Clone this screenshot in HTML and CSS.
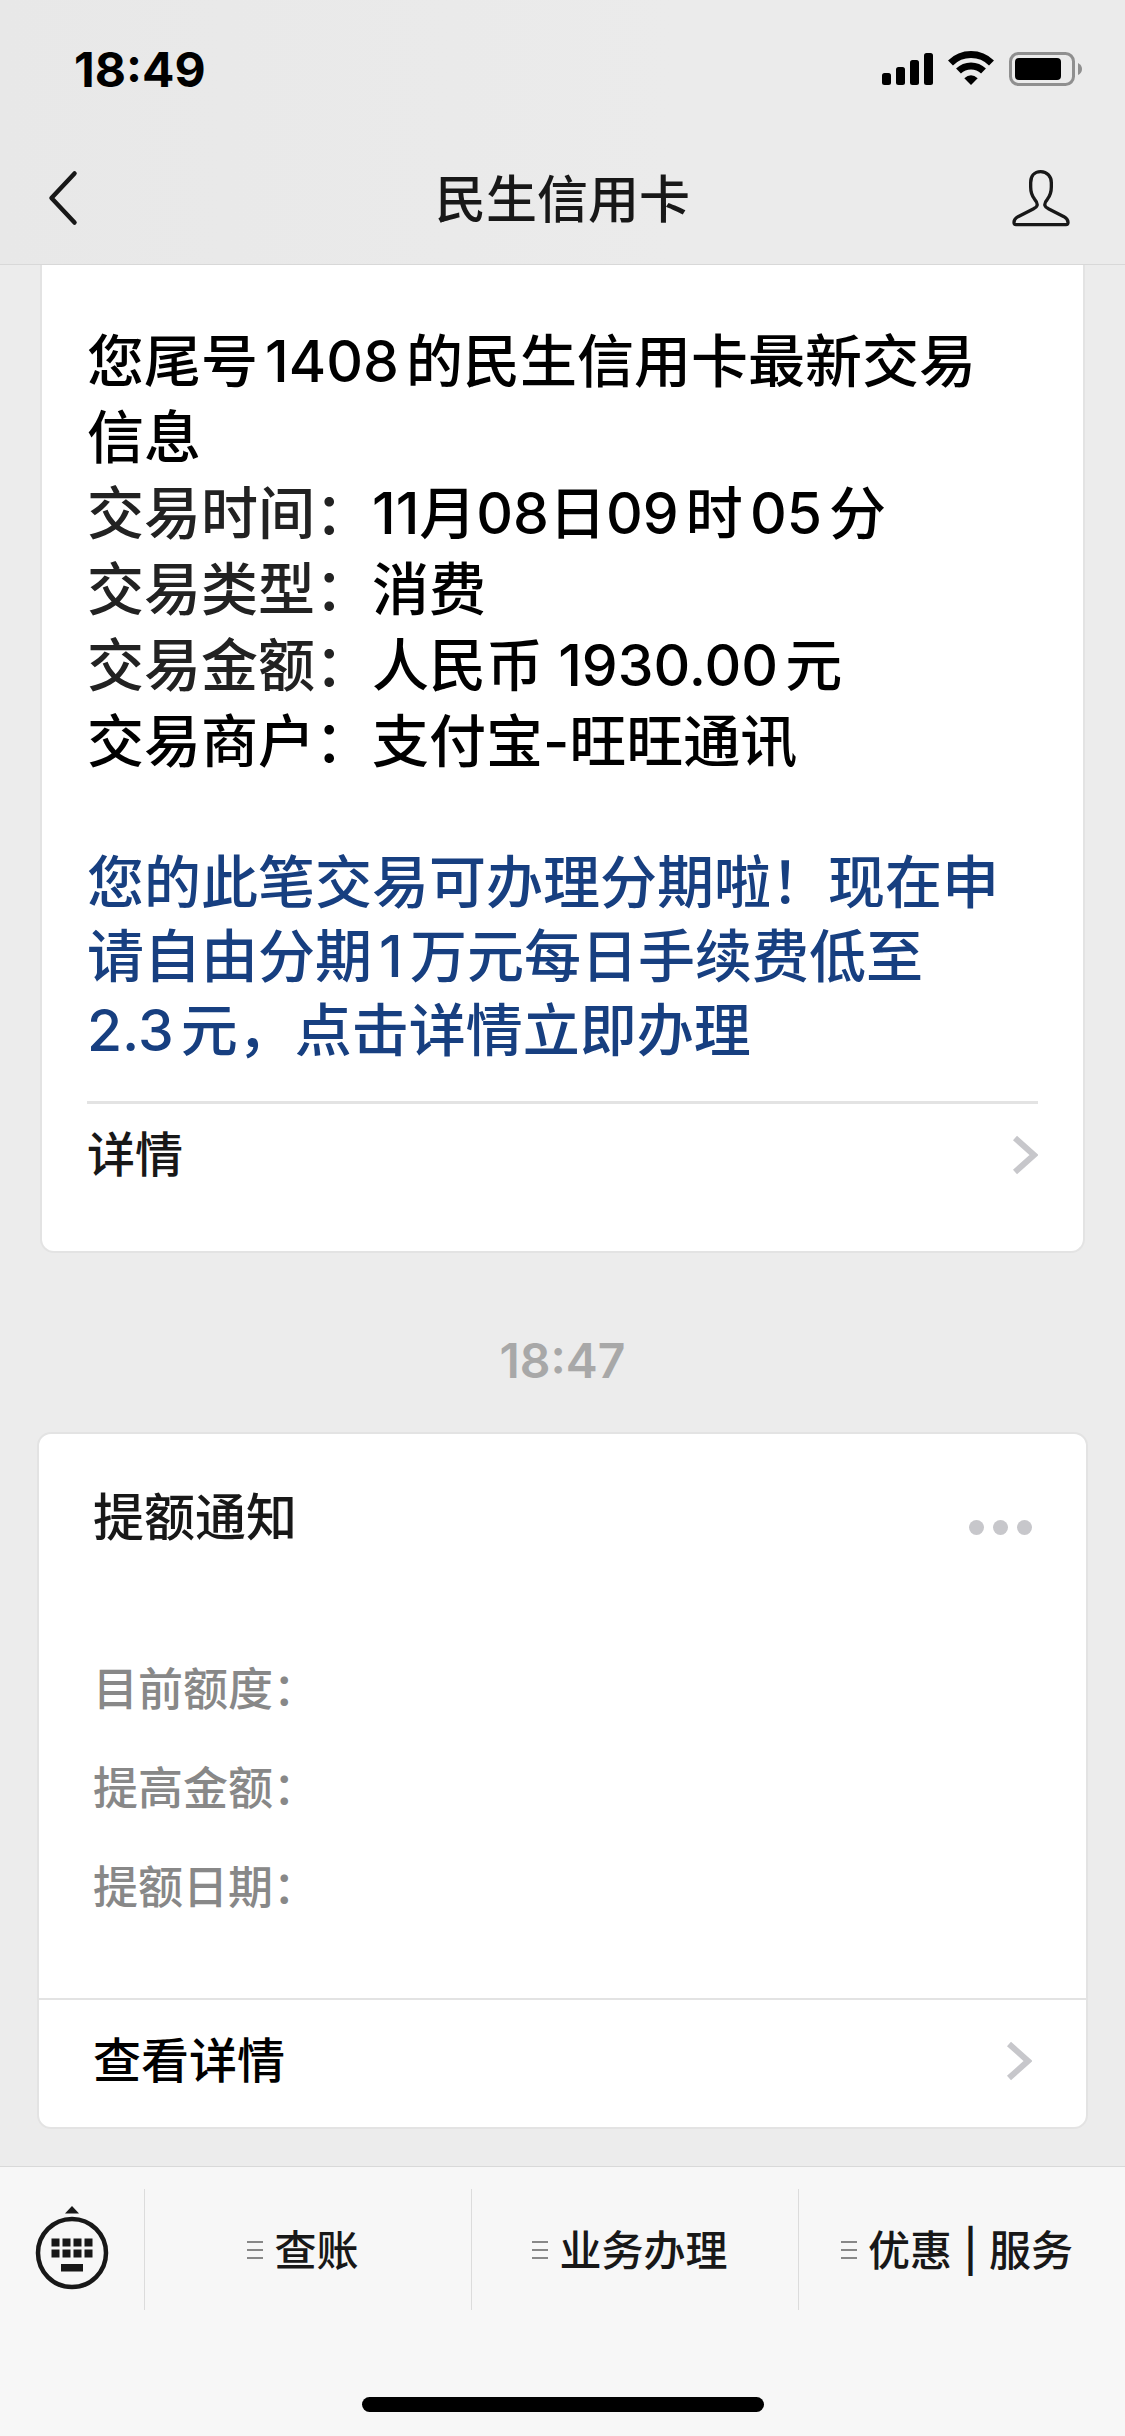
FILE: index.html
```html
<!DOCTYPE html>
<html lang="zh-CN">
<head>
<meta charset="utf-8">
<meta name="viewport" content="width=device-width, initial-scale=1">
<title>民生信用卡</title>
<link rel="stylesheet" href="styles.css">
</head>
<body>
<header class="top">
  <div class="status">
    <time class="clock">18:49</time>
    <svg class="status-icons" width="202" height="36" viewBox="0 0 202 36" aria-hidden="true">
      <rect x="1" y="22" width="9" height="12" rx="2.5"/>
      <rect x="15" y="16" width="9" height="18" rx="2.5"/>
      <rect x="29" y="9" width="9" height="25" rx="2.5"/>
      <rect x="43" y="2" width="9" height="32" rx="2.5"/>
      <path d="M69.500 12.500A29 29 0 0 1 110.500 12.500M77.500 20.500A18 18 0 0 1 102.500 20.500" fill="none" stroke="#000" stroke-width="7" transform="translate(0 -.5)"/>
      <path d="M83.300 27.300Q90 21 96.700 27.300L90 34Z"/>
      <rect x="129.500" y="2.500" width="63" height="31" rx="8" fill="none" stroke="#8f8f8f" stroke-width="3"/>
      <rect x="134" y="7" width="46" height="22" rx="4"/>
      <path d="M197 12Q201 14 201 18T197 24Z" fill="#8f8f8f"/>
    </svg>
  </div>
  <nav class="nav">
    <button class="nav-btn" type="button" aria-label="返回">
      <svg width="32" height="56" viewBox="0 0 32 56"><path d="M27.500 3.500 4.500 28l23 24.500" fill="none" stroke="#181818" stroke-width="4.500" stroke-linecap="round" stroke-linejoin="round"/></svg>
    </button>
    <h1 class="title">民生信用卡</h1>
    <button class="nav-btn nav-btn-end" type="button" aria-label="公众号资料">
      <svg width="68" height="62" viewBox="420 438 204 186"><path d="M512 452C492 452 482 467 482 485V498C482 513 487 526 494 535C501 543 503 548 501 554C500 558 496 561 491 563L444 587C435 592 432 598 432 604C432 609 433 611 438 611H588C593 611 594 609 594 604C594 598 591 592 582 587L535 563C530 561 526 558 525 554C523 548 525 543 532 535C539 526 544 513 544 498V485C544 467 532 452 512 452Z" fill="none" stroke="#181818" stroke-width="10" stroke-linejoin="round"/></svg>
    </button>
  </nav>
</header>

<main class="chat">
  <article class="card card-trade">
    <div class="trade-text">
      <p>您尾号1408的民生信用卡最新交易信息</p>
      <p><span class="label">交易时间：</span><span class="date">11月08日</span>09时05分</p>
      <p><span class="label">交易类型：</span>消费</p>
      <p><span class="label">交易金额：</span>人民币 1930.00元</p>
      <p>交易商户：支付宝-旺旺通讯</p>
    </div>
    <p class="offer">您的此笔交易可办理分期啦！现在申请自由分期1万元每日手续费低至2.3元，点击详情立即办理</p>
    <a class="more more-trade" href="#trade"><span class="more-text">详情</span>
      <svg width="26" height="40" viewBox="0 0 26 40" aria-hidden="true"><path d="M3 3 22 20 3 37" class="arrow"/></svg>
    </a>
  </article>

  <time class="stamp">18:47</time>

  <article class="card card-limit">
    <header class="limit-head">
      <h2 class="limit-title">提额通知</h2>
      <button class="dots" type="button" aria-label="更多"><i></i><i></i><i></i></button>
    </header>
    <ul class="fields">
      <li>目前额度：</li>
      <li>提高金额：</li>
      <li>提额日期：</li>
    </ul>
    <a class="more more-limit" href="#limit"><span class="more-text">查看详情</span>
      <svg width="26" height="40" viewBox="0 0 26 40" aria-hidden="true"><path d="M3 3 22 20 3 37" class="arrow"/></svg>
    </a>
  </article>
</main>

<footer class="dock">
  <div class="menu">
    <button class="keyboard" type="button" aria-label="切换键盘">
      <svg width="74" height="88" viewBox="0 0 74 88" fill="#181818">
        <path d="M37 0 44 7.500H30Z"/>
        <circle cx="37" cy="47" r="34" fill="none" stroke="#181818" stroke-width="4.500"/>
        <path d="M16.500 32.500h8v8h-8zM27.500 32.500h8v8h-8zM38.500 32.500h8v8h-8zM49.500 32.500h8v8h-8zM16.500 43.500h8v8h-8zM27.500 43.500h8v8h-8zM38.500 43.500h8v8h-8zM49.500 43.500h8v8h-8zM26 58h22v7.500H26z"/>
      </svg>
    </button>
    <button class="item" type="button"><svg width="16" height="18" viewBox="0 0 16 18" aria-hidden="true"><path d="M0 1h16M0 9h16M0 17h16" class="lines"/></svg><span class="item-text">查账</span></button>
    <button class="item" type="button"><svg width="16" height="18" viewBox="0 0 16 18" aria-hidden="true"><path d="M0 1h16M0 9h16M0 17h16" class="lines"/></svg><span class="item-text">业务办理</span></button>
    <button class="item" type="button"><svg width="16" height="18" viewBox="0 0 16 18" aria-hidden="true"><path d="M0 1h16M0 9h16M0 17h16" class="lines"/></svg><span class="item-text">优惠 | 服务</span></button>
  </div>
  <div class="home"></div>
</footer>
</body>
</html>
```
FILE: styles.css
```css
* {
  box-sizing: border-box;
  margin: 0;
  padding: 0;
}

body {
  display: flex;
  flex-direction: column;
  min-height: 100vh;
  background: #ececec;
  color: #000;
  font-family: Inter, "Noto Sans CJK SC", sans-serif;
  font-weight: 500;
  text-autospace: normal;
}

button {
  border: 0;
  background: none;
  color: inherit;
  font: inherit;
}

a {
  color: inherit;
  text-decoration: none;
}

svg {
  display: block;
  flex: none;
}

/* Status bar and navigation */
.top {
  background: linear-gradient(90deg, #e8e8e8, #ebebeb 60%);
  border-bottom: 1px solid #d8d8d8;
}

.status {
  display: flex;
  align-items: center;
  justify-content: space-between;
  height: 138px;
  padding: 0 42px 0 74px;
}

.clock {
  font-size: 48px;
  font-weight: 700;
}

.nav {
  display: grid;
  grid-template-columns: 1fr auto 1fr;
  align-items: center;
  height: 126px;
  padding: 0 47px 6px;
}

.nav-btn {
  justify-self: start;
}

.nav-btn-end {
  justify-self: end;
}

.title {
  padding-top: 4px;
  color: #181818;
  font-size: 51px;
  font-weight: 500;
  line-height: 72px;
}

/* Conversation */
.chat {
  display: flex;
  flex: 1;
  flex-direction: column;
}

.card {
  border: 2px solid #e3e3e3;
  border-radius: 14px;
  background: #fff;
}

.card-trade {
  margin: 0 40px;
  padding: 59px 45px 45px;
  border-top: 0;
  border-radius: 0 0 14px 14px;
}

.trade-text,
.offer {
  padding-right: 32px;
  font-size: 57px;
}

.trade-text {
  line-height: 76px;
}

.label {
  color: #222;
}

.date {
  text-autospace: no-autospace;
}

.offer {
  margin: 66px 0 33px;
  color: #173f80;
  line-height: 74px;
}

.more {
  display: flex;
  align-items: center;
  justify-content: space-between;
  font-size: 48px;
}

.more-text {
  padding-bottom: 8px;
}

.more-trade {
  height: 105px;
  border-top: 3px solid #e3e3e3;
  color: #181818;
}

.arrow {
  fill: none;
  stroke: #c7c7cb;
  stroke-width: 6px;
}

.stamp {
  margin: 78px 0 41px;
  color: #a8a8a8;
  font-size: 48px;
  font-weight: 600;
  line-height: 60px;
  text-align: center;
}

.card-limit {
  margin: 0 37px;
  padding-top: 48px;
}

.limit-head {
  display: flex;
  align-items: flex-end;
  justify-content: space-between;
  padding: 0 54px;
}

.limit-title {
  color: #181818;
  font-size: 51px;
  font-weight: 500;
  line-height: 72px;
}

.dots {
  display: flex;
  align-items: center;
  gap: 9px;
  height: 54px;
}

.dots i {
  width: 15px;
  height: 15px;
  border-radius: 50%;
  background: #c7c7cb;
}

.fields {
  margin: 86px 0 61px;
  padding: 0 54px;
  color: #888;
  font-size: 45px;
  line-height: 99px;
  list-style: none;
}

.more-limit {
  height: 129px;
  padding: 0 54px 6px;
  border-top: 2px solid #e3e3e3;
}

/* Bottom menu */
.dock {
  padding: 22px 0 24px;
  border-top: 1px solid #d9d9d9;
  background: #f7f7f7;
}

.menu {
  display: grid;
  grid-template-columns: 144px 1fr 1fr 1fr;
  height: 121px;
}

.keyboard {
  display: flex;
  align-items: center;
  justify-content: center;
}

.item {
  display: flex;
  align-items: center;
  justify-content: center;
  gap: 11px;
  padding-right: 10px;
  border-left: 1px solid #dcdcdc;
  color: #181818;
  font-size: 42px;
  white-space: nowrap;
}

.item-text {
  padding-bottom: 4px;
}

.lines {
  stroke: #888;
  stroke-width: 2px;
}

.home {
  width: 402px;
  height: 15px;
  margin: 87px auto 0;
  border-radius: 8px;
  background: #000;
}
```
